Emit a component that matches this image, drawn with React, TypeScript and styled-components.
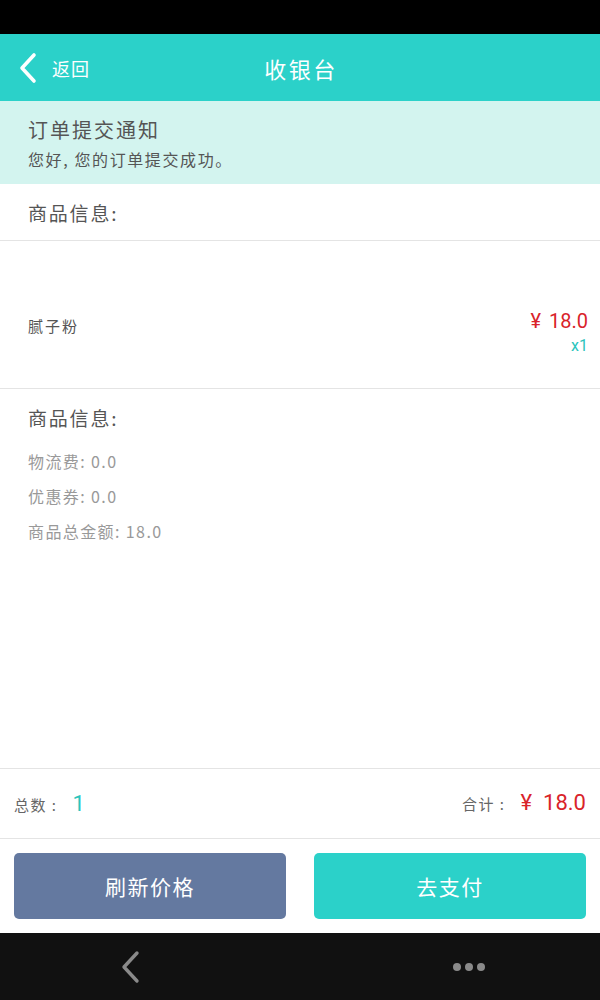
import React from 'react';
import styled, { createGlobalStyle } from 'styled-components';

const GlobalStyle = createGlobalStyle`
  html, body {
    margin: 0;
    padding: 0;
    background: #fff;
  }
  body {
    font-family: Roboto, "Noto Sans CJK SC", "Noto Sans", sans-serif;
  }
`;

const App = () => {
  return (
    <>
      <GlobalStyle />
      <Page>
        <StatusBar />
        <Header>
          <BackLink>
            <svg width="20" height="32" viewBox="0 0 20 32">
              <path d="M16 3 L4 16 L16 29" fill="none" stroke="#fff" strokeWidth="3.6" strokeLinecap="round" strokeLinejoin="round" />
            </svg>
            <span>返回</span>
          </BackLink>
          <Title>收银台</Title>
        </Header>
        <Notice>
          <NoticeTitle>订单提交通知</NoticeTitle>
          <NoticeText>您好, 您的订单提交成功。</NoticeText>
        </Notice>
        <SectionHead>商品信息:</SectionHead>
        <ItemRow>
          <ItemName>腻子粉</ItemName>
          <ItemPrice>
            <Price size={20}>
              <Yen>¥</Yen>18.0
            </Price>
            <Qty>x1</Qty>
          </ItemPrice>
        </ItemRow>
        <InfoBlock>
          <InfoTitle>商品信息:</InfoTitle>
          <InfoLine>物流费: 0.0</InfoLine>
          <InfoLine>优惠券: 0.0</InfoLine>
          <InfoLine>商品总金额: 18.0</InfoLine>
        </InfoBlock>
        <Totals>
          <TotalGroup>
            <TotalLabel>总数 :</TotalLabel>
            <Count>1</Count>
          </TotalGroup>
          <TotalGroup>
            <TotalLabel>合计 :</TotalLabel>
            <Price size={22}>
              <Yen wide>¥</Yen>18.0
            </Price>
          </TotalGroup>
        </Totals>
        <Actions>
          <ActionButton tone="#6479a0">刷新价格</ActionButton>
          <ActionButton tone="#2bd1c9">去支付</ActionButton>
        </Actions>
        <NavBar>
          <svg width="20" height="34" viewBox="0 0 20 34">
            <path d="M17 3 L4 17 L17 31" fill="none" stroke="#8a8a8a" strokeWidth="3.4" strokeLinecap="round" strokeLinejoin="round" />
          </svg>
          <Dots>
            <i />
            <i />
            <i />
          </Dots>
        </NavBar>
      </Page>
    </>
  );
};

export default App;

const Page = styled.div`
  height: 1000px;
  display: flex;
  flex-direction: column;
  overflow: hidden;
`;

const StatusBar = styled.div`
  height: 34px;
  background: #000;
  flex-shrink: 0;
`;

const Header = styled.div`
  height: 67px;
  background: #2bd1c9;
  position: relative;
  display: flex;
  align-items: center;
  justify-content: center;
  flex-shrink: 0;
`;

const BackLink = styled.div`
  position: absolute;
  left: 18px;
  top: 0;
  bottom: 0;
  display: flex;
  align-items: center;
  gap: 14px;
  color: #fff;
  font-size: 18px;
  letter-spacing: 1px;
  font-family: "Noto Sans CJK SC", sans-serif;
`;

const Title = styled.div`
  color: #fff;
  font-size: 22px;
  letter-spacing: 2.5px;
  margin-right: -2px;
  font-family: "Noto Sans CJK SC", sans-serif;
`;

const Notice = styled.div`
  height: 83px;
  background: #d3f4ef;
  padding: 15px 0 0 28px;
  box-sizing: border-box;
  flex-shrink: 0;
`;

const NoticeTitle = styled.div`
  font-size: 20px;
  line-height: 28px;
  letter-spacing: 2px;
  color: #555;
  font-family: "Noto Sans CJK SC", sans-serif;
`;

const NoticeText = styled.div`
  font-size: 16px;
  line-height: 24px;
  letter-spacing: 1.6px;
  margin-top: 3px;
  color: #555;
  font-family: "Noto Sans CJK SC", sans-serif;
`;

const SectionHead = styled.div`
  height: 56px;
  display: flex;
  align-items: center;
  padding-left: 28px;
  font-size: 19px;
  letter-spacing: 1.8px;
  color: #555;
  border-bottom: 1px solid #e4e4e4;
  font-family: "Noto Sans CJK SC", sans-serif;
  flex-shrink: 0;
`;

const ItemRow = styled.div`
  height: 148px;
  display: flex;
  align-items: center;
  justify-content: space-between;
  padding: 22px 12px 0 28px;
  box-sizing: border-box;
  border-bottom: 1px solid #e4e4e4;
  flex-shrink: 0;
`;

const ItemName = styled.div`
  font-size: 15px;
  letter-spacing: 2px;
  color: #555;
  font-family: "Noto Sans CJK SC", sans-serif;
`;

const ItemPrice = styled.div`
  display: flex;
  flex-direction: column;
  align-items: flex-end;
  margin-top: 12px;
`;

const Price = styled.div<{ size: number }>`
  font-size: ${(p) => p.size}px;
  color: #d9232a;
  font-family: Roboto, "Noto Sans CJK SC", sans-serif;
  line-height: 1.2;
`;

const Yen = styled.span<{ wide?: boolean }>`
  margin-right: ${(p) => (p.wide ? 11 : 8)}px;
`;

const Qty = styled.div`
  font-size: 16px;
  color: #2bc4bc;
  font-family: Roboto, sans-serif;
  margin-top: 3px;
`;

const InfoBlock = styled.div`
  flex: 1;
  padding: 15px 0 0 28px;
  border-bottom: 1px solid #e4e4e4;
  font-family: "Noto Sans CJK SC", sans-serif;
`;

const InfoTitle = styled.div`
  font-size: 19px;
  line-height: 28px;
  letter-spacing: 1.8px;
  color: #555;
  margin-bottom: 12px;
`;

const InfoLine = styled.div`
  font-size: 16px;
  line-height: 35px;
  letter-spacing: 1.4px;
  color: #999;
`;

const Totals = styled.div`
  height: 69px;
  display: flex;
  align-items: center;
  justify-content: space-between;
  padding: 0 14px;
  border-bottom: 1px solid #e4e4e4;
  flex-shrink: 0;
`;

const TotalGroup = styled.div`
  display: flex;
  align-items: baseline;
  gap: 15px;
`;

const TotalLabel = styled.div`
  font-size: 15px;
  letter-spacing: 1.5px;
  color: #666;
  font-family: "Noto Sans CJK SC", sans-serif;
`;

const Count = styled.div`
  font-size: 22px;
  color: #2bc4bc;
  font-family: Roboto, sans-serif;
`;

const Actions = styled.div`
  height: 94px;
  display: flex;
  gap: 28px;
  padding: 14px 14px;
  box-sizing: border-box;
  flex-shrink: 0;
`;

const ActionButton = styled.div<{ tone: string }>`
  flex: 1;
  height: 66px;
  border-radius: 5px;
  background: ${(p) => p.tone};
  color: #fff;
  font-size: 21px;
  letter-spacing: 1.5px;
  display: flex;
  align-items: center;
  justify-content: center;
  font-family: "Noto Sans CJK SC", sans-serif;
`;

const NavBar = styled.div`
  height: 67px;
  background: #111;
  display: flex;
  align-items: center;
  justify-content: space-between;
  padding: 0 115px 0 120px;
  flex-shrink: 0;
`;

const Dots = styled.div`
  display: flex;
  gap: 4px;
  i {
    width: 8px;
    height: 8px;
    border-radius: 50%;
    background: #8a8a8a;
  }
`;
